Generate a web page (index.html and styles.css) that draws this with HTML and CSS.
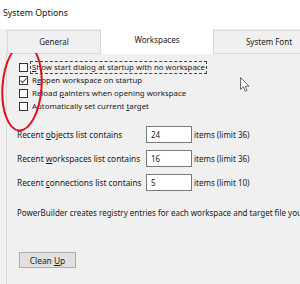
FILE: index.html
```html
<!DOCTYPE html>
<html>
<head>
<meta charset="utf-8">
<link rel="stylesheet" href="styles.css">
</head>
<body>
<div class="window">
  <div class="titlebar">System Options</div>
  <div class="tabs">
    <div class="tab">General</div>
    <div class="tab active">Workspaces</div>
    <div class="tab last">System Font</div>
  </div>
  <div class="pane">
    <div class="checks">
      <div class="check"><span class="box"></span><span class="lbl focus"><u>S</u>how start dialog at startup with no workspace</span></div>
      <div class="check"><span class="box checked"><svg viewBox="0 0 9 9" class="tick"><path d="M1.5 4.6 L3.6 6.7 L7.6 2" fill="none" stroke="#4a4a4a" stroke-width="1.1"/></svg></span><span class="lbl">R<u>e</u>open workspace on startup</span></div>
      <div class="check"><span class="box"></span><span class="lbl">Reload <u>p</u>ainters when opening workspace</span></div>
      <div class="check"><span class="box"></span><span class="lbl">Automatically set current <u>t</u>arget</span></div>
    </div>
    <div class="fields">
      <div class="field"><span class="flabel">Recent <u>o</u>bjects list contains</span><span class="input">24</span><span class="limit">items (limit 36)</span></div>
      <div class="field"><span class="flabel">Recent <u>w</u>orkspaces list contains</span><span class="input">16</span><span class="limit">items (limit 36)</span></div>
      <div class="field"><span class="flabel">Recent <u>c</u>onnections list contains</span><span class="input">5</span><span class="limit">items (limit 10)</span></div>
    </div>
    <p class="note">PowerBuilder creates registry entries for each workspace and target file you open.</p>
    <div class="btnrow"><span class="btn"><span>Clean <u>U</u>p</span></span></div>
  </div>
  <svg class="annot" width="60" height="110" viewBox="0 0 60 110">
    <ellipse cx="22" cy="45" rx="19.5" ry="43.5" transform="rotate(4 22 45)" fill="none" stroke="#e3101a" stroke-width="2"/>
  </svg>
  <svg class="cursor" width="12" height="17" viewBox="0 0 12 17">
    <path d="M0.5 0.5 L0.5 12.5 L3.3 9.8 L5.2 14.2 L7 13.4 L5.2 9.2 L9 9.2 Z" fill="#fff" stroke="#6a6a6a" stroke-width="1" stroke-linejoin="round"/>
  </svg>
</div>
</body>
</html>
```
FILE: styles.css
```css
html, body {
  margin: 0;
  padding: 0;
}
body {
  width: 300px;
  height: 284px;
  overflow: hidden;
  background: #f0f0f0;
  font-family: "Noto Sans", "Open Sans", sans-serif;
  font-size: 8px;
  color: #1a1a1a;
}
.window {
  position: relative;
  width: 300px;
  height: 284px;
  overflow: hidden;
}
.titlebar {
  height: 29px;
  background: #fff;
  box-sizing: border-box;
  padding: 6px 0 0 3px;
  line-height: 14px;
  font-size: 8.8px;
  color: #111;
}
.tabs {
  display: flex;
  align-items: flex-end;
  padding-left: 7px;
  height: 24px;
  position: relative;
  z-index: 1;
}
.tab {
  box-sizing: border-box;
  height: 23px;
  border: 1px solid #d9d9d9;
  border-bottom: none;
  background: #f0f0f0;
  display: flex;
  align-items: center;
  justify-content: center;
  padding-bottom: 2px;
  flex: none;
}
.tab:first-child { width: 94px; }
.tab.active {
  width: 114px;
  height: 25px;
  background: #fff;
  margin-bottom: -1px;
  border-top: none;
  padding-bottom: 4px;
  margin-left: -1px;
  margin-right: -1px;
  position: relative;
  z-index: 2;
}
.tab.last { width: 112px; }
.pane {
  margin-left: 6px;
  border: 1px solid #d9d9d9;
  border-right: none;
  height: 260px;
  box-sizing: border-box;
}
.checks {
  padding: 7px 0 0 12px;
  display: flex;
  flex-direction: column;
}
.check {
  display: flex;
  align-items: center;
  height: 13px;
}
.box {
  width: 9px;
  height: 9px;
  box-sizing: border-box;
  border: 1px solid #333;
  background: #fff;
  flex: none;
  position: relative;
}
.tick {
  position: absolute;
  left: -1px;
  top: -1px;
  width: 9px;
  height: 9px;
}
.lbl {
  margin-left: 2px;
  padding: 0 1px;
  line-height: 11px;
  white-space: nowrap;
  border: 1px solid transparent;
  font-size: 7.85px;
}
.lbl.focus {
  border: 1px dashed #444;
}
u {
  text-decoration-thickness: 1px;
  text-underline-offset: 1px;
}
.fields {
  margin-top: 13px;
  padding-left: 10px;
  display: flex;
  flex-direction: column;
  gap: 7px;
}
.field {
  display: flex;
  align-items: center;
  height: 17px;
}
.flabel {
  width: 129px;
  flex: none;
  white-space: nowrap;
  font-size: 8.3px;
}
.input {
  box-sizing: border-box;
  width: 46px;
  height: 17px;
  border: 1px solid #7a7a7a;
  background: #fff;
  padding-left: 4px;
  line-height: 15px;
  flex: none;
}
.limit {
  margin-left: 2px;
  white-space: nowrap;
}
.note {
  margin: 16px 0 0 10px;
  line-height: 12px;
  white-space: nowrap;
}
.btnrow {
  margin-top: 33px;
  padding-left: 12px;
  display: flex;
}
.btn {
  box-sizing: border-box;
  width: 57px;
  height: 16px;
  border: 1px solid #adadad;
  background: #e1e1e1;
  display: flex;
  align-items: center;
  justify-content: center;
  font-size: 8.4px;
}
.annot {
  position: absolute;
  left: 0;
  top: 42px;
}
.cursor {
  position: absolute;
  left: 240px;
  top: 77px;
}
```
